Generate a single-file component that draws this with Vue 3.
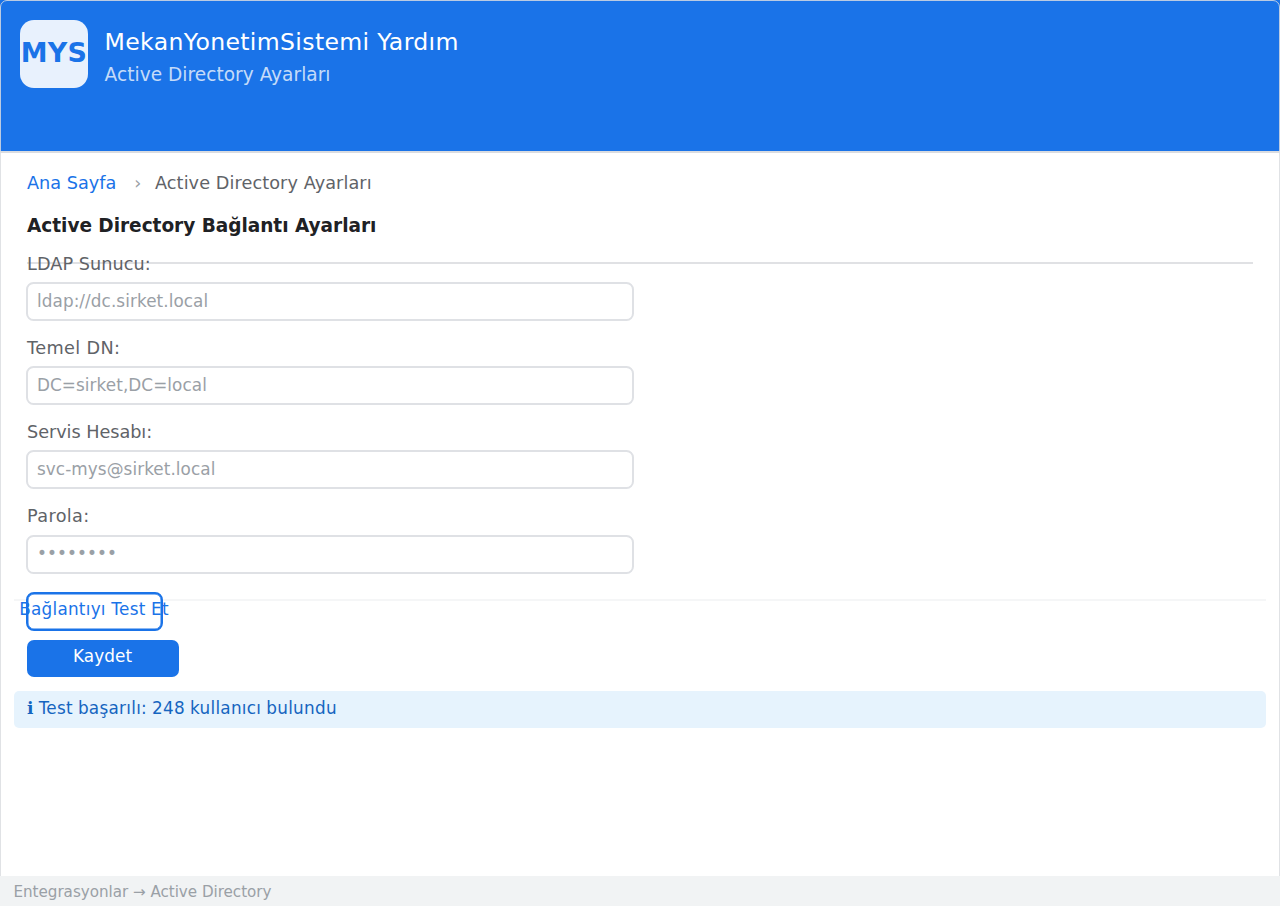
<script setup>
import { ref } from 'vue'

const alanlar = ref([
  { id: 'ldap', etiket: 'LDAP Sunucu:', ornek: 'ldap://dc.sirket.local', tip: 'text', deger: '' },
  { id: 'dn', etiket: 'Temel DN:', ornek: 'DC=sirket,DC=local', tip: 'text', deger: '' },
  { id: 'hesap', etiket: 'Servis Hesabı:', ornek: 'svc-mys@sirket.local', tip: 'text', deger: '' },
  { id: 'parola', etiket: 'Parola:', ornek: '••••••••', tip: 'password', deger: '' }
])

const kullaniciSayisi = ref(248)
</script>

<template>
  <div class="pencere">
    <header class="ust">
      <div class="logo">MYS</div>
      <div class="basliklar">
        <h1>MekanYonetimSistemi Yardım</h1>
        <p>Active Directory Ayarları</p>
      </div>
    </header>
    <main class="icerik">
      <nav class="yol">
        <a class="ana">Ana Sayfa</a>
        <span class="ok">›</span>
        <span class="simdiki">Active Directory Ayarları</span>
      </nav>
      <h2>Active Directory Bağlantı Ayarları</h2>
      <div class="cizgi"></div>
      <form @submit.prevent>
        <div v-for="alan in alanlar" :key="alan.id" class="alan" :class="alan.id">
          <label :for="alan.id">{{ alan.etiket }}</label>
          <input :id="alan.id" v-model="alan.deger" :type="alan.tip" :placeholder="alan.ornek" autocomplete="off" />
        </div>
        <div class="ayrac"></div>
        <button type="button" class="test"><span>Bağlantıyı Test Et</span></button>
        <button type="submit" class="kaydet">Kaydet</button>
      </form>
      <p class="bilgi">ℹ Test başarılı: {{ kullaniciSayisi }} kullanıcı bulundu</p>
    </main>
    <footer class="alt">Entegrasyonlar → Active Directory</footer>
  </div>
</template>

<style>
body {
  background: #fff;
}
</style>

<style scoped>
.pencere {
  position: relative;
  display: flex;
  flex-direction: column;
  height: 906px;
  overflow: hidden;
  box-sizing: border-box;
  font-family: "DejaVu Sans", sans-serif;
  background: #fff;
}
/* ince çerçeve, başlığın üstünde durur */
.pencere::after {
  content: '';
  position: absolute;
  inset: 0;
  border: 1px solid rgba(218, 220, 224, 0.84);
  border-radius: 7px;
  pointer-events: none;
}
h1, h2, p {
  margin: 0;
  font-weight: normal;
}
.ust {
  display: flex;
  gap: 16.6px;
  height: 153px;
  padding: 20px;
  box-sizing: border-box;
  background: #1a73e8;
  border-bottom: 2px solid #dadce0;
}
.logo {
  display: flex;
  justify-content: center;
  width: 68px;
  height: 68px;
  border-radius: 14px;
  background: #e8f1fd;
  color: #1a73e8;
  font-size: 26.95px;
  font-weight: bold;
  letter-spacing: 0.3px;
  line-height: 66px;
}
.basliklar {
  padding-top: 8px;
}
h1 {
  color: #fff;
  font-size: 23.58px;
  letter-spacing: 0.34px;
  line-height: 28px;
}
.basliklar p {
  margin-top: 5px;
  color: rgba(255, 255, 255, 0.75);
  font-size: 18.53px;
  letter-spacing: 0.04px;
  line-height: 28px;
}
.icerik {
  flex: 1;
  padding: 18px 27px 0;
}
.yol {
  display: flex;
  color: #5f6368;
  font-size: 17.68px;
  line-height: 24px;
}
.yol .ana {
  color: #1a73e8;
}
.yol .ok {
  margin: 0 13.6px 0 18px;
  color: #9aa0a6;
}
.yol .simdiki {
  letter-spacing: 0.08px;
}
h2 {
  margin-top: 17.6px;
  color: #202124;
  font-size: 18.53px;
  font-weight: bold;
  letter-spacing: -0.03px;
  line-height: 26px;
}
.cizgi {
  height: 2px;
  margin: 23.4px 0 -13px;
  background: #e0e1e4;
}
.alan {
  height: 84.2px;
}
label {
  position: relative;
  display: block;
  padding-top: 0.6px;
  color: #5f6368;
  font-size: 17.68px;
  line-height: 24px;
}
.ldap label {
  letter-spacing: 0.05px;
}
.dn label,
.parola label {
  letter-spacing: 0.36px;
}
.hesap label {
  letter-spacing: -0.05px;
}
input {
  display: block;
  width: 608px;
  height: 39px;
  margin: 6.4px 0 0 -1px;
  padding: 0 9px 1.8px;
  box-sizing: border-box;
  border: 2px solid #dfe1e5;
  border-radius: 7.5px;
  background: #fff;
  font-family: inherit;
  font-size: 16.84px;
  letter-spacing: 0.07px;
  outline: none;
}
input::placeholder {
  color: #9aa0a6;
  opacity: 1;
}
.ayrac {
  height: 2px;
  margin: 11.2px -13px -9px;
  background: #f5f6f7;
}
button {
  display: flex;
  justify-content: center;
  padding: 0;
  box-sizing: border-box;
  font-family: inherit;
  font-size: 16.84px;
  white-space: nowrap;
}
.test {
  position: relative;
  width: 137px;
  height: 39px;
  margin-left: -1px;
  border: 2px solid #1a73e8;
  border-radius: 8px;
  box-shadow: inset 0 0 0 0.5px #1a73e8;
  background: #fff;
  color: #1a73e8;
  letter-spacing: 0.25px;
  line-height: 30px;
}
.test span {
  margin-left: -1px;
}
.kaydet {
  width: 152px;
  height: 37px;
  margin-top: 9px;
  padding-right: 1px;
  border: none;
  border-radius: 7px;
  background: #1a73e8;
  color: #fff;
  letter-spacing: 0.1px;
  line-height: 32px;
}
.bilgi {
  height: 37px;
  margin: 13.7px -13px 0;
  padding: 0 13px;
  border-radius: 5px;
  background: #e6f3fd;
  color: #1565c0;
  font-size: 16.84px;
  letter-spacing: 0.27px;
  word-spacing: -0.6px;
  line-height: 34px;
}
.alt {
  position: relative;
  z-index: 1;
  height: 30px;
  padding-left: 13.5px;
  background: #f1f3f4;
  color: #9aa0a6;
  font-size: 15.16px;
  letter-spacing: -0.03px;
  line-height: 33px;
}
</style>
